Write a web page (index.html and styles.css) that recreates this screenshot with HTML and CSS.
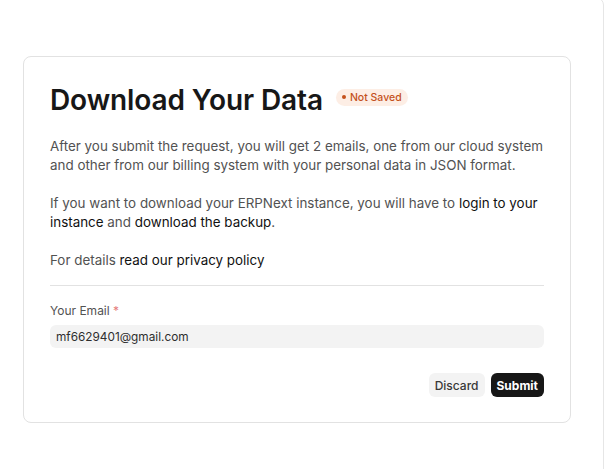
FILE: index.html
```html
<!doctype html>
<html>
<head>
    <meta charset="utf-8"/>
    <title>Download Your Data</title>
    <link rel="stylesheet" href="styles.css">
</head>
<body>
    <div class="page">
        <div class="card">
            <div class="head">
                <h1>Download Your Data</h1>
                <span class="badge"><i class="dot"></i>Not Saved</span>
            </div>

            <p>After you submit the request, you will get 2 emails, one from our cloud system and other from our billing system with your personal data in JSON format.</p>
            <p>If you want to download your ERPNext instance, you will have to <a href="#">login to your instance</a> and <a href="#">download the backup</a>.</p>
            <p class="last">For details <a href="#">read our privacy policy</a></p>

            <hr>

            <label class="label" for="email">Your Email <span class="req">*</span></label>
            <input class="input" id="email" type="text" value="mf6629401@gmail.com">

            <div class="actions">
                <button class="btn">Discard</button>
                <button class="btn primary">Submit</button>
            </div>
        </div>
    </div>
</body>
</html>
```

FILE: styles.css
```css
html {
    font-family:"Inter","Noto Sans",sans-serif;
}
body {
    margin:0;
    background:#ffffff;
    overflow:hidden;
}

* {
    box-sizing:border-box;
}

.page {
    margin:-3px 0 0 -20px;
    width:624px;
    min-height:500px;
    border:1px solid #e6e6e6;
    border-radius:8px;
    padding:58px 0 0 42px;
}

.card {
    width:548px;
    border:1px solid #e2e2e2;
    border-radius:8px;
    padding:26px 26px 25px 26px;
    color:#525252;
    font-size:13.4px;
    line-height:19px;
}

.head {
    display:flex;
    align-items:center;
    gap:13px;
    margin-bottom:20px;
}
h1 {
    margin:0;
    font-size:28px;
    line-height:34px;
    font-weight:600;
    color:#171717;
    letter-spacing:-0.1px;
}
.badge {
    display:inline-flex;
    align-items:center;
    gap:4px;
    background:#fdeee5;
    color:#c4511c;
    font-size:10.5px;
    font-weight:500;
    line-height:17px;
    padding:0 6px;
    border-radius:9px;
    margin-top:-6px;
}
.dot {
    width:4px;
    height:4px;
    border-radius:50%;
    background:#c4511c;
}

p { margin:0 0 19px 0; }
p.last { margin-bottom:15px; }
a {
    color:#111111;
    text-decoration:none;
}

hr {
    border:0;
    border-top:1px solid #e2e2e2;
    margin:0 0 17px 0;
}

.label {
    display:block;
    font-size:12px;
    line-height:16px;
    margin-bottom:6px;
}
.req { color:#e57b7b; }

.input {
    display:block;
    width:100%;
    height:23px;
    border:0;
    border-radius:6px;
    background:#f3f3f3;
    padding:0 6px;
    font-family:inherit;
    font-size:11.8px;
    color:#2e2e2e;
}

.actions {
    display:flex;
    justify-content:flex-end;
    gap:6px;
    margin-top:25px;
}
.btn {
    height:24px;
    border:0;
    border-radius:6px;
    background:#f3f3f3;
    color:#383838;
    font-family:inherit;
    font-size:12px;
    font-weight:500;
    padding:0 6px;
}
.btn.primary {
    background:#171717;
    color:#ffffff;
    font-weight:700;
}
```
